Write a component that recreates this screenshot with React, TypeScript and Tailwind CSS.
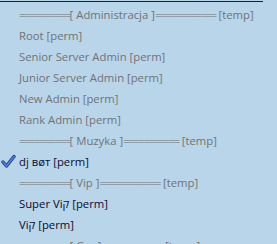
import React from 'react';

type Row =
  | { kind: 'header'; name: string; after: number }
  | { kind: 'item'; label: string; active?: boolean; checked?: boolean };

const rows: Row[] = [
  { kind: 'header', name: 'Administracja', after: 12 },
  { kind: 'item', label: 'Root [perm]' },
  { kind: 'item', label: 'Senior Server Admin [perm]' },
  { kind: 'item', label: 'Junior Server Admin [perm]' },
  { kind: 'item', label: 'New Admin [perm]' },
  { kind: 'item', label: 'Rank Admin [perm]' },
  { kind: 'header', name: 'Muzyka', after: 11 },
  { kind: 'item', label: 'dj вøт [perm]', active: true, checked: true },
  { kind: 'header', name: 'Vip', after: 12 },
  { kind: 'item', label: 'Super Viק [perm]', active: true },
  { kind: 'item', label: 'Viק [perm]', active: true },
  { kind: 'header', name: 'Gry', after: 12 },
];

// equals signs overlap a little so they read as one double line
const Equals = ({ n }: { n: number }) => (
  <span className="tracking-[-1.4px]">{'='.repeat(n)}</span>
);

const Check = () => (
  <svg width="15" height="15" viewBox="0 0 15 15" className="absolute left-[1px] top-[3px]">
    <path d="M2 8 L5.5 12 L13 2.5" fill="none" stroke="#1f3a7a" strokeWidth="3.4" strokeLinecap="round" strokeLinejoin="round" />
    <path d="M2 8 L5.5 12 L13 2.5" fill="none" stroke="#4a86e8" strokeWidth="1.7" strokeLinecap="round" strokeLinejoin="round" />
  </svg>
);

export default function App() {
  return (
    <div className="w-[277px] h-[244px] overflow-hidden bg-[#b9d5ea] font-['Open_Sans',sans-serif] text-[11.3px] leading-[21px]">
      <div className="w-[263px] h-[1px] mt-[1px] bg-[#0a1a6e]" />
      <div className="flex flex-col pt-[2px]">
        {rows.map((r, i) => (
          <div key={i} className="relative h-[21px] pl-[19px] flex items-center whitespace-nowrap">
            {r.kind === 'header' ? (
              <span className="text-[#727272]">
                <Equals n={10} />[ {r.name} ]<Equals n={r.after} /> [temp]
              </span>
            ) : (
              <>
                {r.checked && <Check />}
                <span className={r.active ? 'text-[#0b0b2e]' : 'text-[#727272]'}>{r.label}</span>
              </>
            )}
          </div>
        ))}
      </div>
    </div>
  );
}
